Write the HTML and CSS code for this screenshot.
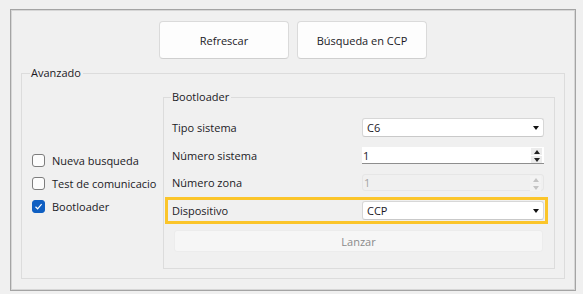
FILE: index.html
```html
<!DOCTYPE html>
<html lang="es">
<head>
	<meta charset="UTF-8">
	<title>Bootloader</title>
	<link rel="stylesheet" href="styles.css">
</head>
<body>
	<div class="frame">
		<div class="toolbar">
			<button class="btn">Refrescar</button>
			<button class="btn">Búsqueda en CCP</button>
		</div>

		<fieldset class="group advanced">
			<legend>Avanzado</legend>
			<div class="advanced_body">
				<div class="checks">
					<label class="check"><span class="box"></span>Nueva busqueda</label>
					<label class="check"><span class="box"></span>Test de comunicacio</label>
					<label class="check"><span class="box on"><svg width="9" height="9" viewBox="0 0 9 9"><path d="M1.5 4.8 L3.6 6.8 L7.6 2.2" fill="none" stroke="#fff" stroke-width="1.2"/></svg></span>Bootloader</label>
				</div>

				<fieldset class="group boot">
					<legend>Bootloader</legend>
					<div class="form">
						<div class="row">
							<span class="lbl">Tipo sistema</span>
							<div class="combo">C6<span class="arrow"></span></div>
						</div>
						<div class="row row_spin">
							<span class="lbl">Número sistema</span>
							<div class="spin">1
								<span class="spin_btns"><span class="up"></span><span class="down"></span></span>
							</div>
						</div>
						<div class="row row_spin">
							<span class="lbl">Número zona</span>
							<div class="spin disabled">1
								<span class="spin_btns"><span class="up"></span><span class="down"></span></span>
							</div>
						</div>
						<div class="row mark">
							<span class="lbl">Dispositivo</span>
							<div class="combo">CCP<span class="arrow"></span></div>
						</div>
						<button class="launch" disabled>Lanzar</button>
					</div>
				</fieldset>
			</div>
		</fieldset>
	</div>
</body>
</html>
```

FILE: styles.css
```css
*{margin: 0; padding: 0; box-sizing: border-box;}
html, body{
	width: 583px;
	height: 294px;
	overflow: hidden;
}
body{
	background: #f0f0f0;
	font: 11px "Open Sans", "Noto Sans", sans-serif;
	color: #1b1a1f;
}
.frame{
	margin: 9px 7px 0 10px;
	height: 282px;
	border: 1px solid #a4a4a4;
	box-shadow: inset 0 0 0 1px #d6d6d6;
	padding: 1px;
	display: flex;
	flex-direction: column;
}
.toolbar{
	display: flex;
	justify-content: center;
	gap: 8px;
	padding: 10px 0 7px;
}
.btn{
	width: 130px;
	height: 38px;
	background: #fdfdfd;
	border: 1px solid #dadada;
	border-bottom-color: #cfcfcf;
	border-radius: 4px;
	font: inherit;
	color: inherit;
}
.group{
	border: 1px solid #dcdcdc;
	min-width: 0;
}
.group legend{
	line-height: 14px;
	padding: 0 2px 0 1px;
}
.advanced{
	flex: 1;
	margin: 0 9px 10px;
	display: flex;
	flex-direction: column;
}
.advanced legend{
	margin-left: 8px;
}
.advanced_body{
	flex: 1;
	display: flex;
	padding: 10px 9px 9px 10px;
}
.checks{
	width: 124px;
	margin-right: 7px;
	padding-top: 8px;
	display: flex;
	flex-direction: column;
	justify-content: center;
	white-space: nowrap;
}
.check{
	height: 23px;
	display: flex;
	align-items: center;
	gap: 7px;
}
.box{
	width: 13px;
	height: 13px;
	flex: none;
	border: 1px solid #7d7d7d;
	border-radius: 3px;
	background: #fcfcfc;
	display: flex;
	align-items: center;
	justify-content: center;
}
.box.on{
	background: #0f5fc2;
	border-color: #0f5fc2;
}
.boot{
	flex: 1;
	display: flex;
	flex-direction: column;
}
.boot legend{
	margin-left: 7px;
}
.form{
	padding: 14px 10px 0 8px;
	display: flex;
	flex-direction: column;
	gap: 10px;
}
.row{
	display: flex;
	align-items: center;
	justify-content: space-between;
	height: 19px;
}
.row_spin{
	height: 17px;
}
.mark{
	height: 27px;
	margin: -4px -4px -4px -7px;
	border: 3px solid #fbc52a;
	padding: 1px 1px 1px 4px;
}
.combo{
	width: 182px;
	height: 19px;
	background: #fff;
	border: 1px solid #d7d7d7;
	border-bottom-color: #c9c9c9;
	border-radius: 3px;
	padding-left: 4px;
	display: flex;
	align-items: center;
	position: relative;
}
.arrow{
	position: absolute;
	right: 4px;
	top: 7px;
	border-left: 3.5px solid transparent;
	border-right: 3.5px solid transparent;
	border-top: 4px solid #111;
}
.spin{
	width: 182px;
	height: 17px;
	background: #fff;
	border-bottom: 1px solid #8e8e8e;
	padding-left: 1px;
	display: flex;
	align-items: center;
	position: relative;
}
.spin_btns{
	position: absolute;
	right: 2px;
	top: 1px;
	width: 11px;
	display: flex;
	flex-direction: column;
	gap: 1px;
}
.spin_btns span{
	height: 7px;
	background: #ececec;
	display: flex;
	align-items: center;
	justify-content: center;
}
.spin_btns span::after{
	content: "";
	border-left: 3px solid transparent;
	border-right: 3px solid transparent;
}
.up::after{border-bottom: 4px solid #222;}
.down::after{border-top: 4px solid #222;}
.spin.disabled{
	background: #f0f0f0;
	border: 1px solid #e6e6e6;
	border-radius: 3px;
	color: #a3a3a3;
}
.disabled .spin_btns span{background: #f3f3f3;}
.disabled .up::after{border-bottom-color: #c4c4c4;}
.disabled .down::after{border-top-color: #c4c4c4;}
.launch{
	height: 22px;
	margin: 0 1px 0 2px;
	background: #f6f6f6;
	border: 1px solid #ececec;
	border-radius: 3px;
	font: inherit;
	color: #8a8a8a;
}
```
